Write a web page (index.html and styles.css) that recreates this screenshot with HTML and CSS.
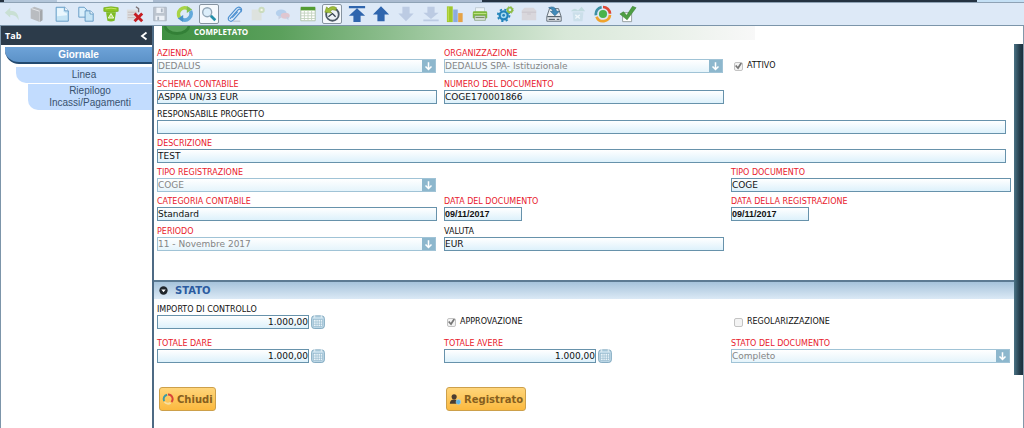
FILE: index.html
```html
<!DOCTYPE html>
<html lang="it">
<head>
<meta charset="utf-8">
<title>Giornale</title>
<link rel="stylesheet" href="styles.css">
</head>
<body>
<svg class="defs" aria-hidden="true">
  <symbol id="arrow" viewBox="0 0 14 14"><path d="M7 2.5V11M3.5 7.5L7 11l3.5-3.5" fill="none" stroke="#fff" stroke-width="1.8"/></symbol>
  <symbol id="calc" viewBox="0 0 14 14"><rect x=".7" y=".9" width="12.6" height="12.5" rx="2.5" fill="#c3dcea" stroke="#7ba5bd"/><path d="M3.5 0v3M10.500 0v3" stroke="#d9e8f0" stroke-width="1.500"/><rect x="2.500" y="4.500" width="9" height="7" fill="#eaf4fa" stroke="#8fb5ca" stroke-width=".6"/><path d="M2.500 7h9M2.500 9.300h9M5 4.500v7M7.200 4.500v7M9.500 4.500v7" stroke="#8fb5ca" stroke-width=".6"/></symbol>
</svg>
<div class="app">
  <div class="strip"></div>
  <div class="toolbar" role="toolbar" aria-label="Comandi">
    <button class="tool" aria-label="Annulla"><svg viewBox="0 0 20 20"><path d="M2 8.500L8 3v3.500c6 0 9.500 3.500 9.500 10.500-2-4-4.500-6-9.500-6V14z" fill="#c9e0d4"/></svg></button>
    <button class="tool" aria-label="Guida"><svg viewBox="0 0 20 20"><path d="M3 4l4-2 9 3v12l-3 2-10-4z" fill="#b9bcc0"/><path d="M4 4l9 3v12" fill="none" stroke="#e8eaec"/><path d="M13 7l3-2v12l-3 2z" fill="#a4a7ab"/></svg></button>
    <button class="tool" aria-label="Nuovo"><svg viewBox="0 0 20 20"><path d="M3.500 2.500H13l4 4v11.500H3.500z" fill="#c5e4f5" stroke="#5d96c2"/><path d="M4.500 3.500h7v4l4 2v2l-11 1z" fill="#eaf7fe"/><path d="M13 2.500v4h4" fill="#fff" stroke="#5d96c2"/></svg></button>
    <button class="tool" aria-label="Copia"><svg viewBox="0 0 20 20"><path d="M2 2.500h6l3 3v8H2z" fill="#d9effb" stroke="#5d96c2"/><path d="M9 6.500h6l3 3v8.500H9z" fill="#c5e4f5" stroke="#5d96c2"/><path d="M14.500 6.500v3.500H18" fill="#fff" stroke="#5d96c2"/></svg></button>
    <button class="tool" aria-label="Elimina"><svg viewBox="0 0 20 20"><path d="M2 3q8-2 16 0v4q-8 2-16 0z" fill="#8cc522" stroke="#70a81b" stroke-width=".7"/><path d="M4 4.300q6-1.500 12 0" stroke="#cbea70" fill="none"/><path d="M4.500 8h11l-1.500 9.500q-4 1.500-8 0z" fill="#7ebc25"/><path d="M10 9.500l3 5H7z" fill="#b7df73" stroke="#f7fff0"/></svg></button>
    <button class="tool" aria-label="Elimina selezione"><svg viewBox="0 0 20 20"><path d="M1 5h12v12H1z" fill="#dcdee0"/><path d="M2 8h10M2 11h8M2 14h8" stroke="#c4bab8"/><path d="M11 2l3 2v4" fill="none" stroke="#7d7173" stroke-width="1.500"/><path d="M9.500 9.500l8.500 8.500M18 9.500L9.500 18" stroke="#c51d22" stroke-width="3.200"/></svg></button>
    <button class="tool" aria-label="Salva"><svg viewBox="0 0 20 20"><path d="M3 2.500h14v15H3z" fill="#bdc5cf" stroke="#aab4c1"/><path d="M6 3h8v6H6zM5 12h10v5H5z" fill="#edf1f7"/><path d="M11 4h2v4h-2zM7 13h2v4H7z" fill="#aab4c1"/></svg></button>
    <button class="tool" aria-label="Aggiorna"><svg viewBox="0 0 20 20" fill="none" stroke-width="4"><path d="M4 14a7 7 0 0 1 10-9.500" stroke="#a9d446"/><path d="M16 6.500A7 7 0 0 1 6 15.500" stroke="#63a9db"/><path d="M12 1l6 4-6 4z" fill="#80bf52" stroke="none"/><path d="M8 11l-6 4 6 4z" fill="#4792c9" stroke="none"/></svg></button>
    <button class="tool boxed" aria-label="Cerca" aria-pressed="true"><svg viewBox="0 0 20 20"><circle cx="8" cy="8" r="5" fill="#dceefa" stroke="#91a5b6" stroke-width="1.500"/><path d="M12 12l5 5" stroke="#238fa9" stroke-width="3"/></svg></button>
    <button class="tool" aria-label="Allegati"><svg viewBox="0 0 20 20" fill="none" stroke="#4e91d1" stroke-width="1.300"><path d="M5.500 15.500l9-10c2-2.200 4.500 0 2.700 2.200l-8 9c-3 3.200-7.500-.2-4.700-3.700l8-9.200c3.500-3.600 8 .8 5 4"/><path d="M8 14l6-6.500"/><path d="M9 18h8" stroke="#bcc5d2"/></svg></button>
    <button class="tool" aria-label="Nota"><svg viewBox="0 0 20 20"><path d="M3 5h11v12H3z" fill="#dde2de"/><circle cx="14" cy="5.500" r="3.500" fill="#cbdcbf"/><circle cx="14" cy="5.500" r="1.300" fill="#f4f8e8"/></svg></button>
    <button class="tool" aria-label="Chat"><svg viewBox="0 0 20 20"><ellipse cx="8" cy="9" rx="6" ry="4" fill="#b5d0ed"/><ellipse cx="12.500" cy="12" rx="5" ry="3.300" fill="#dfc6d0"/><path d="M5 12v4l4-3zM13 14l3 3v-4z" fill="#c6cfe2"/></svg></button>
    <button class="tool" aria-label="Griglia"><svg viewBox="0 0 20 20"><path d="M2 3h16v14.500H2z" fill="#fff" stroke="#abc1a7"/><path d="M2 2h16v4H2z" fill="#539c32"/><path d="M2 9h16M2 12h16M2 15h16M6 6v11M10 6v11M14 6v11" stroke="#c3d2bd"/></svg></button>
    <button class="tool boxed" aria-label="Storico"><svg viewBox="0 0 20 20"><circle cx="10.500" cy="10.500" r="7" fill="#edf2f6" stroke="#4c5965" stroke-width="2"/><path d="M6 13l4.500-3.500L14 13" fill="none" stroke="#34424f" stroke-width="1.500"/><path d="M2 8l2-6 2 2q4-4 9-1l-1 3q-4-2-6 1l2 2z" fill="#9dbd38" stroke="#728e24" stroke-width=".6"/></svg></button>
    <button class="tool" aria-label="Primo"><svg viewBox="0 0 20 20"><path d="M1 1h18v2.500H1zM10 3.500l9 8.500h-5v7H6v-7H1z" fill="#2f65ad"/></svg></button>
    <button class="tool" aria-label="Precedente"><svg viewBox="0 0 20 20"><path d="M10 1.500l9 9h-5v7.500H6v-7.500H1z" fill="#2f65ad"/></svg></button>
    <button class="tool" aria-label="Successivo"><svg viewBox="0 0 20 20"><path d="M10 18L1.500 9.500H6V2h8v7.500h4.500z" fill="#bccbe3"/></svg></button>
    <button class="tool" aria-label="Ultimo"><svg viewBox="0 0 20 20"><path d="M10 15.500l-8.500-7H6V2h8v6.500h4.500zM1.500 16h17v2h-17z" fill="#bccbe3"/></svg></button>
    <button class="tool" aria-label="Report"><svg viewBox="0 0 20 20"><path d="M1 1.500h6.500V19H1z" fill="#a0c72c"/><path d="M8 5h5v14H8z" fill="#8cabe0"/><path d="M13.500 9H18.500v10h-5z" fill="#e6a346"/><path d="M2.500 2.500v15.500" stroke="#c6e45f"/></svg></button>
    <button class="tool" aria-label="Stampa"><svg viewBox="0 0 20 20"><path d="M5 3h10v5H5z" fill="#eef4f8" stroke="#a6b4bc" stroke-width=".6"/><rect x="2" y="7" width="16" height="8" rx="1.500" fill="#7eb93c"/><path d="M3 9.500h14" stroke="#c8e693"/><path d="M4 12h12v5H4z" fill="#dce5df" stroke="#809b72" stroke-width=".8"/><path d="M5 14h10" stroke="#65774f"/></svg></button>
    <button class="tool" aria-label="Processi"><svg viewBox="0 0 20 20"><circle cx="8.500" cy="11.500" r="4.500" fill="#a7daf1" stroke="#2283ba" stroke-width="2.500"/><circle cx="8.500" cy="11.500" r="6.500" fill="none" stroke="#2283ba" stroke-width="2" stroke-dasharray="2.500 2.600"/><circle cx="8.500" cy="11.500" r="1.500" fill="#2283ba"/><circle cx="15.500" cy="5.500" r="2.500" fill="none" stroke="#8dbd48" stroke-width="2"/><circle cx="15.500" cy="5.500" r="3.800" fill="none" stroke="#8dbd48" stroke-dasharray="1.500 1.500"/></svg></button>
    <button class="tool" aria-label="Archivia"><svg viewBox="0 0 20 20"><path d="M2 6l3-3h10l3 3v11H2z" fill="#d9d7dc"/><path d="M2 8h16M8 10h4" stroke="#c7c3c9"/></svg></button>
    <button class="tool" aria-label="Esporta"><svg viewBox="0 0 20 20"><path d="M5 4h10l3 9v5H2v-5z" fill="#e9eef2" stroke="#59656f"/><path d="M2.500 13h15M4 16h7M13 16h3" stroke="#59656f" stroke-width="1.300"/><path d="M4 3q7-3 9 4h3l-5 5-5-5h3q-1-3-5-4z" fill="#438cba" stroke="#245d83" stroke-width=".6"/></svg></button>
    <button class="tool" aria-label="Cestino"><svg viewBox="0 0 20 20"><path d="M4 8h12l-1 10H5z" fill="#cbdfea"/><path d="M2 7q4-5 8-1l4-4 4 5z" fill="#c0dbdf"/><path d="M7 11l5 4m0-4l-5 4" stroke="#eef6fa" stroke-width="1.500"/></svg></button>
    <button class="tool" aria-label="Flusso"><svg viewBox="0 0 20 20" fill="none" stroke-width="3"><path d="M10 2.200a7.800 7.800 0 0 1 7.800 7.500" stroke="#dd4736"/><path d="M17.800 11a7.800 7.800 0 0 1-15 2" stroke="#f0a32c"/><path d="M2.200 11.500A7.800 7.800 0 0 1 8.500 2.300" stroke="#3d91a5"/><circle cx="10" cy="10" r="4.500" fill="#4ab34c" stroke="none"/></svg></button>
    <button class="tool" aria-label="Conferma"><svg viewBox="0 0 20 20"><path d="M4 8.500h10V18.500H4z" fill="#fff" stroke="#8e9a98"/><path d="M1 10l4-2.500 3.500 4L15 1.500l4 1.500L9 16.500z" fill="#4e9e43" stroke="#39822f" stroke-width=".6"/></svg></button>
  </div>
  <div class="body">
    <aside class="sidebar">
      <div class="side-head"><span>Tab</span><button class="collapse" aria-label="Comprimi"><svg viewBox="0 0 8 10"><path d="M6.500 1.500L2 5l4.500 3.500" fill="none" stroke="#fff" stroke-width="1.800"/></svg></button></div>
      <nav class="tabs">
        <a class="tab current" href="#giornale">Giornale</a>
        <a class="tab level-1" href="#linea">Linea</a>
        <a class="tab level-2" href="#riepilogo">Riepilogo Incassi/Pagamenti</a>
      </nav>
    </aside>
    <main class="content">
      <div class="panel">
        <div class="banner"><svg class="orb" viewBox="0 0 28 14"><ellipse cx="15" cy="0" rx="13" ry="9" fill="#2f7c33" opacity=".8"/><ellipse cx="15" cy="-2" rx="11" ry="8" fill="#57a159"/></svg><span>COMPLETATO</span></div>
        <form class="form" id="giornale">
          <div class="field"><label class="req" for="azienda">AZIENDA</label><div class="combo"><select id="azienda" disabled><option>DEDALUS</option></select><svg><use href="#arrow"/></svg></div></div>
          <div class="field"><label class="req" for="org">ORGANIZZAZIONE</label><div class="combo"><select id="org" disabled><option>DEDALUS SPA- Istituzionale</option></select><svg><use href="#arrow"/></svg></div></div>
          <label class="check"><input type="checkbox" checked disabled>ATTIVO</label>

          <div class="field first"><label class="req" for="schema">SCHEMA CONTABILE</label><input class="text" id="schema" value="ASPPA UN/33 EUR"></div>
          <div class="field"><label class="req" for="numero">NUMERO DEL DOCUMENTO</label><input class="text" id="numero" value="COGE170001866"></div>

          <div class="field wide"><label for="resp">RESPONSABILE PROGETTO</label><input class="text" id="resp"></div>
          <div class="field wide"><label class="req" for="descr">DESCRIZIONE</label><input class="text" id="descr" value="TEST"></div>

          <div class="field"><label class="req" for="tiporeg">TIPO REGISTRAZIONE</label><div class="combo"><select id="tiporeg" disabled><option>COGE</option></select><svg><use href="#arrow"/></svg></div></div>
          <div class="field third"><label class="req" for="tipodoc">TIPO DOCUMENTO</label><input class="text" id="tipodoc" value="COGE"></div>

          <div class="field"><label class="req" for="categoria">CATEGORIA CONTABILE</label><input class="text" id="categoria" value="Standard"></div>
          <div class="field"><label class="req" for="datadoc">DATA DEL DOCUMENTO</label><input class="text date" id="datadoc" value="09/11/2017"></div>
          <div class="field"><label class="req" for="datareg">DATA DELLA REGISTRAZIONE</label><input class="text date" id="datareg" value="09/11/2017"></div>

          <div class="field"><label class="req" for="periodo">PERIODO</label><div class="combo"><select id="periodo" disabled><option>11 - Novembre 2017</option></select><svg><use href="#arrow"/></svg></div></div>
          <div class="field"><label for="valuta">VALUTA</label><input class="text" id="valuta" value="EUR"></div>
        </form>
        <h2 class="section"><svg viewBox="0 0 10 10"><circle cx="5" cy="5" r="4.600" fill="#20262c"/><path d="M2.500 3.800h5L5 7z" fill="#fff"/></svg>STATO</h2>
        <form class="form status">
          <div class="field"><label for="importo">IMPORTO DI CONTROLLO</label><div class="amount"><input class="text" id="importo" value="1.000,00"><button type="button" aria-label="Calcolatrice"><svg><use href="#calc"/></svg></button></div></div>
          <label class="check"><input type="checkbox" checked disabled>APPROVAZIONE</label>
          <label class="check"><input type="checkbox" disabled>REGOLARIZZAZIONE</label>

          <div class="field"><label class="req" for="dare">TOTALE DARE</label><div class="amount"><input class="text" id="dare" value="1.000,00"><button type="button" aria-label="Calcolatrice"><svg><use href="#calc"/></svg></button></div></div>
          <div class="field"><label class="req" for="avere">TOTALE AVERE</label><div class="amount"><input class="text" id="avere" value="1.000,00"><button type="button" aria-label="Calcolatrice"><svg><use href="#calc"/></svg></button></div></div>
          <div class="field"><label class="req" for="stato">STATO DEL DOCUMENTO</label><div class="combo"><select id="stato" disabled><option>Completo</option></select><svg><use href="#arrow"/></svg></div></div>

          <button class="action" type="button"><svg viewBox="0 0 14 14" fill="none" stroke-width="2.300"><path d="M7 1.800A5.200 5.200 0 0 1 11 10.500" stroke="#d8453a"/><path d="M10 11.500a5.200 5.200 0 0 1-7-1" stroke="#f6dfa0"/><path d="M2.500 9.500A5.200 5.200 0 0 1 6 2" stroke="#3b9aa8"/></svg>Chiudi</button>
          <button class="action" type="button"><svg viewBox="0 0 14 14"><circle cx="6" cy="4.500" r="3" fill="#4a3c30"/><path d="M1 12.500q0-5 5-5t5 5z" fill="#4a3c30"/><circle cx="11" cy="10.500" r="2.800" fill="#5fb3e0" stroke="#b6dcef" stroke-width=".6"/></svg>Registrato</button>
        </form>
      </div>
      <div class="scroll"><div class="thumb"></div></div>
    </main>
  </div>
</div>
</body>
</html>
```
FILE: styles.css
```css
* { box-sizing: border-box; }
body { margin: 0; background: #fff; font-family: "DejaVu Sans", Verdana, sans-serif; font-size: 9px; color: #111; }
button { border: 0; padding: 0; background: none; font: inherit; color: inherit; }
svg { display: block; }
.defs { display: none; }
.app { display: flex; flex-direction: column; min-height: 100vh; }

.strip {
  height: 3px;
  border-bottom: 1px solid #8ea2b5;
  background: linear-gradient(90deg, #26323f 0 4px, #b3c6da 4px 57px, #dfeaf6 57px 153px, #aabbd0 153px 482px, #243241 482px 977px, #c4e0f5 977px);
}
.toolbar {
  display: grid;
  grid-template-columns: repeat(26, minmax(0, 25px));
  justify-content: space-between;
  align-items: center;
  height: 23px;
  padding-right: calc(100% - 640px);
  background: #dde9f7;
  border-bottom: 1px solid #7c95aa;
}
.tool { display: flex; justify-content: center; align-items: center; justify-self: center; width: 20px; height: 20px; }
.tool svg { flex: none; width: 18px; height: 18px; }
.boxed { background: #f5f9fd; border: 1px solid #8794a1; border-radius: 2px; }

.body { display: flex; flex: 1; }
.sidebar { flex: none; width: 154px; border-left: 1px solid #7c95aa; border-right: 2px solid #4d6a84; }
.side-head { display: flex; align-items: center; justify-content: space-between; height: 19px; padding: 0 4px; background: #2c3b4a; color: #fff; font: bold 9px "Open Sans", sans-serif; }
.collapse svg { width: 8px; height: 10px; }
.tabs { display: flex; flex-direction: column; gap: 1px; padding: 2px 0 0 4px; }
.tab { color: #38526f; background: #c2dcfe; font: 10px/12px "Liberation Sans", Arial, sans-serif; text-align: center; text-decoration: none; border-bottom-left-radius: 10px; }
.current { height: 17px; margin-bottom: 2px; padding-top: 2px; background: linear-gradient(#6ea3d8, #5c92c8); color: #fff; font-weight: bold; border-bottom: 2px solid #22496f; border-bottom-left-radius: 14px; }
.level-1 { margin-left: 11px; padding: 2px 0; }
.level-2 { margin-left: 23px; padding: 1px 18px; }

.content { display: flex; flex: 1; min-width: 0; }
.panel { flex: 1; min-width: 0; }
.banner { display: flex; align-items: flex-start; gap: 4px; width: 69%; height: 14px; margin-left: 8px; background: linear-gradient(90deg, #3e8f41, #5ba05c 20%, #a7cda8 48%, #d8e8d8 68%, #f8f8f8); color: #fff; font: bold 8px/11px "Open Sans", sans-serif; }
.orb { width: 28px; height: 14px; }

.form { display: grid; grid-template-columns: repeat(3, minmax(0, 1fr)); grid-template-rows: 27px 26px 25px 25px 25px 26px 25px; gap: 4px 7px; padding: 8px 3px 29px; }
.field { display: flex; flex-direction: column; align-items: flex-start; }
.field label { padding-top: 1px; font-size: 8px; line-height: 10px; white-space: nowrap; }
.field .req { color: #e8202c; }
.first { grid-column-start: 1; }
.wide { grid-column: 1 / -1; padding-right: 5px; }
.third { grid-column: 3; }
.text { width: 100%; height: 14px; margin: 0; padding: 0; border: 1px solid #6792ab; border-radius: 0; background: linear-gradient(#fff, #ddf1fb); color: #111; font: 9px "DejaVu Sans", Verdana, sans-serif; outline: 0; }
.date { width: 78px; font: bold 9px "Liberation Sans", Arial, sans-serif; }
.combo { display: flex; width: calc(100% - 1px); height: 14px; border: 1px solid #a0c3d6; background: linear-gradient(#fff, #e5f4fb); }
.combo select { flex: 1; min-width: 0; appearance: none; margin: 0; padding: 0; border: 0; background: none; color: #858585; font: 9px "DejaVu Sans", Verdana, sans-serif; opacity: 1; }
.combo svg { flex: none; width: 13px; height: 12px; background: #8db7cd; }
.check { display: flex; align-items: center; align-self: start; gap: 4px; height: 10px; margin: 13px 0 0 3px; font-size: 8px; line-height: 10px; white-space: nowrap; }
.check input { appearance: none; display: grid; place-items: center; width: 9px; height: 9px; margin: 0; border: 1px solid #c3c3c3; border-radius: 2px; background: #f3f3f3; }
.check input:checked::after { content: ""; width: 7px; height: 7px; background: #777; clip-path: polygon(0 50%, 20% 35%, 40% 60%, 80% 0, 100% 15%, 45% 100%); }

.section { display: flex; align-items: center; gap: 7px; height: 19px; margin: 0; padding-left: 5px; border-top: 2px solid #5c7a92; background: linear-gradient(#a6c3db, #dbe9f5); color: #2b5ba0; font-size: 10px; }
.section svg { width: 9px; height: 9px; }
.status { grid-template-rows: 30px 25px 24px; padding: 4px 3px; }
.status .field label { padding-bottom: 1px; line-height: 9px; }
.status { padding-top: 5px; }
.status .action { margin-top: 20px; }
.amount { display: flex; gap: 2px; }
.amount .text { width: 152px; text-align: right; }
.amount svg { width: 14px; height: 14px; }
.action { display: flex; align-items: center; justify-self: start; gap: 3px; height: 24px; margin-left: 2px; padding: 0 2px; border: 1px solid #cda04a; border-radius: 3px; background: linear-gradient(#ffd57a, #fbb93f); color: #875f1e; font-weight: bold; font-size: 10px; }
.action svg { width: 12px; height: 12px; }
.scroll { flex: none; width: 10px; padding-top: 18px; border-right: 1px solid #8298aa; }
.thumb { height: 331px; background: linear-gradient(90deg, #4a7284, #26404f 60%, #1c2f3d); }
```
